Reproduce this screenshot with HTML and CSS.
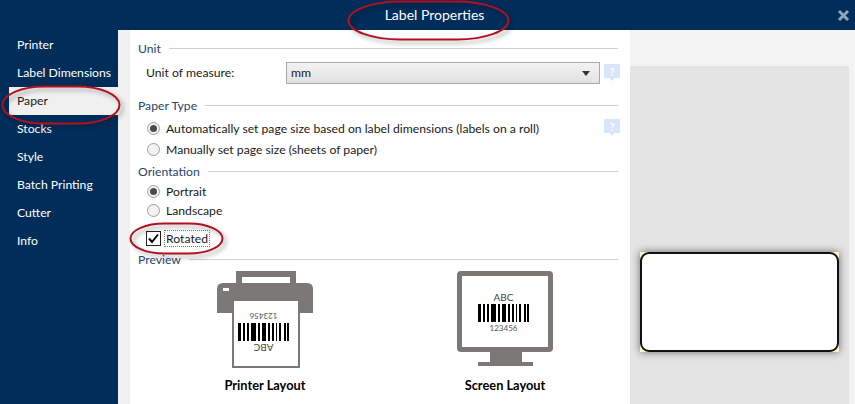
FILE: index.html
```html
<!DOCTYPE html>
<html lang="en">

<head>
    <meta charset="UTF-8">
    <title>Label Properties</title>
    <link rel="stylesheet" href="styles.css">
</head>

<body>
    <div class="dialog">
        <div class="titlebar">
            <span class="title">Label Properties</span>
            <svg class="close" width="13" height="13" viewBox="0 0 13 13">
                <path d="M2 2 L11 11 M11 2 L2 11" />
            </svg>
        </div>
        <div class="main">
            <ul class="nav">
                <li>Printer</li>
                <li>Label Dimensions</li>
                <li class="active">Paper</li>
                <li>Stocks</li>
                <li>Style</li>
                <li>Batch Printing</li>
                <li>Cutter</li>
                <li>Info</li>
            </ul>
            <div class="strip"></div>
            <div class="form">
                <div class="heading unit"><span>Unit</span></div>
                <div class="measure">
                    <label>Unit of measure:</label>
                    <div class="combo">mm<i class="arrow"></i></div>
                    <svg class="help" width="16" height="18" viewBox="0 0 16 18">
                        <path d="M1.5 0 H14.5 Q16 0 16 1.5 V12.5 Q16 14 14.5 14 H10.5 L8 17 L5.500 14 H1.500 Q0 14 0 12.500 V1.500 Q0 0 1.500 0 Z" />
                        <text x="8" y="11.500">?</text>
                    </svg>
                </div>
                <div class="heading paper-type"><span>Paper Type</span></div>
                <div class="option first">
                    <i class="radio on"></i>Automatically set page size based on label dimensions (labels on a roll)
                    <svg class="help" width="16" height="18" viewBox="0 0 16 18">
                        <path d="M1.5 0 H14.5 Q16 0 16 1.5 V12.5 Q16 14 14.5 14 H10.5 L8 17 L5.500 14 H1.500 Q0 14 0 12.500 V1.500 Q0 0 1.500 0 Z" />
                        <text x="8" y="11.500">?</text>
                    </svg>
                </div>
                <div class="option"><i class="radio"></i>Manually set page size (sheets of paper)</div>
                <div class="heading orientation"><span>Orientation</span></div>
                <div class="option compact"><i class="radio on"></i>Portrait</div>
                <div class="option compact"><i class="radio"></i>Landscape</div>
                <div class="option rotated">
                    <svg class="check" width="15" height="15" viewBox="0 0 15 15">
                        <rect x="0.500" y="0.500" width="14" height="14" />
                        <path d="M3 7.500 L6 11 L12 3.500" />
                    </svg>
                    <span class="focus">Rotated</span>
                </div>
                <div class="heading preview"><span>Preview</span></div>
                <div class="layouts">
                    <div class="layout">
                        <svg width="96" height="97" viewBox="0 0 96 97">
                            <path class="ink" fill-rule="evenodd" d="M19 0 H79 V12 H90 Q96 12 96 18 V42 H0 V18 Q0 12 6 12 H19 Z M25 6 V12 H73 V6 Z" />
                            <rect x="6" y="17" width="6" height="3" fill="#fff" />
                            <rect class="sheet" x="16" y="29" width="66" height="67" />
                            <g transform="translate(21 52)">
                                <path d="M0 0h3v18h-3z M5 0h2v18h-2z M9 0h2v18h-2z M13 0h5v18h-5z M20 0h2v18h-2z M24 0h4v18h-4z M30 0h2v18h-2z M34 0h2v18h-2z M38 0h1v18h-1z M41 0h2v18h-2z M46 0h2v18h-2z M49 0h2v18h-2z" />
                            </g>
                            <text class="digits" transform="rotate(180 46.500 45)" x="46.500" y="48">123456</text>
                            <text class="abc" transform="rotate(180 46.500 77)" x="46.500" y="81">ABC</text>
                        </svg>
                        <b>Printer Layout</b>
                    </div>
                    <div class="layout">
                        <svg width="96" height="97" viewBox="0 0 96 97">
                            <rect class="ink" x="0" y="0" width="96" height="81" rx="4" />
                            <rect x="5" y="5" width="86" height="71" fill="#fff" />
                            <path class="ink" d="M33 81 H65 V91 H76 V95 H21 V91 H33 Z" />
                            <g transform="translate(21 33)">
                                <path d="M0 0h3v18h-3z M5 0h2v18h-2z M9 0h2v18h-2z M13 0h5v18h-5z M20 0h2v18h-2z M24 0h4v18h-4z M30 0h2v18h-2z M34 0h2v18h-2z M38 0h1v18h-1z M41 0h2v18h-2z M46 0h2v18h-2z M49 0h2v18h-2z" />
                            </g>
                            <text class="abc" x="46.500" y="30">ABC</text>
                            <text class="digits" x="46.500" y="60">123456</text>
                        </svg>
                        <b>Screen Layout</b>
                    </div>
                </div>
            </div>
            <div class="side">
                <div class="canvas">
                    <div class="sticker"><div class="label"></div></div>
                </div>
            </div>
        </div>
    </div>

    <svg class="marks" width="855" height="404" viewBox="0 0 855 404">
        <rect x="348.500" y="1.500" width="160" height="38" rx="52" ry="19" />
        <rect x="2.500" y="86.500" width="117" height="37" rx="42" ry="18.500" />
        <rect x="130.500" y="223.500" width="92" height="30" rx="34" ry="15" />
    </svg>
</body>

</html>
```
FILE: styles.css
```css
* {
    margin: 0;
    padding: 0;
    box-sizing: border-box;
    list-style: none;
}

body {
    width: 855px;
    height: 404px;
    overflow: hidden;
    position: relative;
    font-family: Lato, "Open Sans", sans-serif;
    font-size: 12.200px;
    color: #1a1a1a;
    background: #fff;
}

.dialog {
    display: flex;
    flex-direction: column;
    height: 404px;
}

.titlebar {
    height: 30px;
    flex: none;
    background: #002d5a;
    display: flex;
    align-items: center;
    justify-content: center;
    position: relative;
    padding-left: 14px;
}

.title {
    color: #fff;
    font-size: 14px;
    margin-top: -1px;
}

.close {
    position: absolute;
    right: 5px;
    top: 9px;
}

.close path {
    stroke: #8fa6bd;
    stroke-width: 3;
    fill: none;
}

.main {
    flex: 1;
    display: flex;
    min-height: 0;
}

.nav {
    width: 118px;
    flex: none;
    background: #002d5a;
    padding: 1px 0 0 9px;
}

.nav li {
    height: 28px;
    line-height: 27px;
    padding-left: 8px;
    color: #fff;
    white-space: nowrap;
}

.nav li.active {
    background: #f0f0f0;
    color: #1a1a1a;
}

.strip {
    width: 12px;
    flex: none;
    background: #f0f0f0;
}

.form {
    width: 500px;
    flex: none;
    padding: 0 12px 0 8px;
    background: #fff;
    position: relative;
}

.heading {
    display: flex;
    align-items: center;
    gap: 8px;
    height: 16px;
    color: #26456b;
}

.heading::after {
    content: "";
    flex: 1;
    height: 1px;
    background: #d0d0d0;
}

.unit {
    margin-top: 10px;
}

.measure {
    display: flex;
    align-items: center;
    height: 21px;
    margin-top: 6px;
    padding-left: 8px;
    position: relative;
}

.measure label {
    width: 140px;
}

.combo {
    width: 314px;
    height: 22px;
    border: 1px solid #a9a9a9;
    background: linear-gradient(#f2f2f2, #e2e2e2);
    padding-left: 4px;
    line-height: 20px;
    position: relative;
}

.arrow {
    position: absolute;
    right: 9px;
    top: 8px;
    border-top: 5px solid #333;
    border-left: 4px solid transparent;
    border-right: 4px solid transparent;
}

.help {
    position: absolute;
    left: 466px;
}

.help path {
    fill: #d7e6fa;
}

.help text {
    fill: #fff;
    font-size: 11px;
    font-weight: bold;
    text-anchor: middle;
}

.measure .help {
    top: 2px;
}

.paper-type {
    margin-top: 14px;
}

.option {
    display: flex;
    align-items: center;
    height: 21px;
    padding-left: 9px;
    position: relative;
}

.option .help {
    top: 1px;
}

.option.first {
    margin-top: 5px;
}

.option.compact {
    height: 19px;
}

.radio {
    width: 13px;
    height: 13px;
    border: 1px solid #a0a0a0;
    border-radius: 50%;
    background: #f2f2f2;
    margin-right: 6px;
    flex: none;
    display: flex;
    align-items: center;
    justify-content: center;
}

.radio.on::after {
    content: "";
    width: 7px;
    height: 7px;
    border-radius: 50%;
    background: #4a4a4a;
}

.orientation {
    margin-top: 3px;
}

.orientation + .option {
    margin-top: 3px;
}

.rotated {
    height: 24px;
    margin-top: 6px;
    padding-left: 8px;
}

.check {
    flex: none;
    margin-right: 3px;
}

.check rect {
    fill: #fff;
    stroke: #222;
}

.check path {
    fill: none;
    stroke: #000;
    stroke-width: 2;
}

.focus {
    border: 1px dotted #777;
    padding: 0 1px;
    line-height: 15px;
}

.preview {
    margin-top: 1px;
}

.layouts {
    display: flex;
    gap: 144px;
    padding-left: 79px;
    margin-top: 4px;
}

.layout {
    width: 96px;
    display: flex;
    flex-direction: column;
    align-items: center;
}

.layout b {
    white-space: nowrap;
    margin-top: 9px;
    color: #000;
    font-size: 12.800px;
}

.ink {
    fill: #7b7876;
}

.sheet {
    fill: #fff;
    stroke: #7b7876;
    stroke-width: 2;
}

.digits {
    font-size: 8px;
    text-anchor: middle;
    fill: #555;
}

.abc {
    font-size: 10px;
    text-anchor: middle;
    fill: #444;
}

.side {
    flex: 1;
    background: #f3f3f3;
    padding: 36px 6px 0 0;
}

.canvas {
    height: 100%;
    background: #e4e4e4;
    padding: 186px 0 0 10px;
}

.sticker {
    width: 199px;
    height: 100px;
    background: #f8f5c8;
    box-shadow: 0 0 8px rgba(0, 0, 0, 0.55);
}

.label {
    height: 100%;
    background: #fff;
    border: 2px solid #111;
    border-radius: 9px;
}

.marks {
    position: absolute;
    left: 0;
    top: 0;
    filter: drop-shadow(3px 3px 2px rgba(0, 0, 0, 0.35));
}

.marks rect {
    fill: none;
    stroke: #b3111d;
    stroke-width: 2;
}
```
